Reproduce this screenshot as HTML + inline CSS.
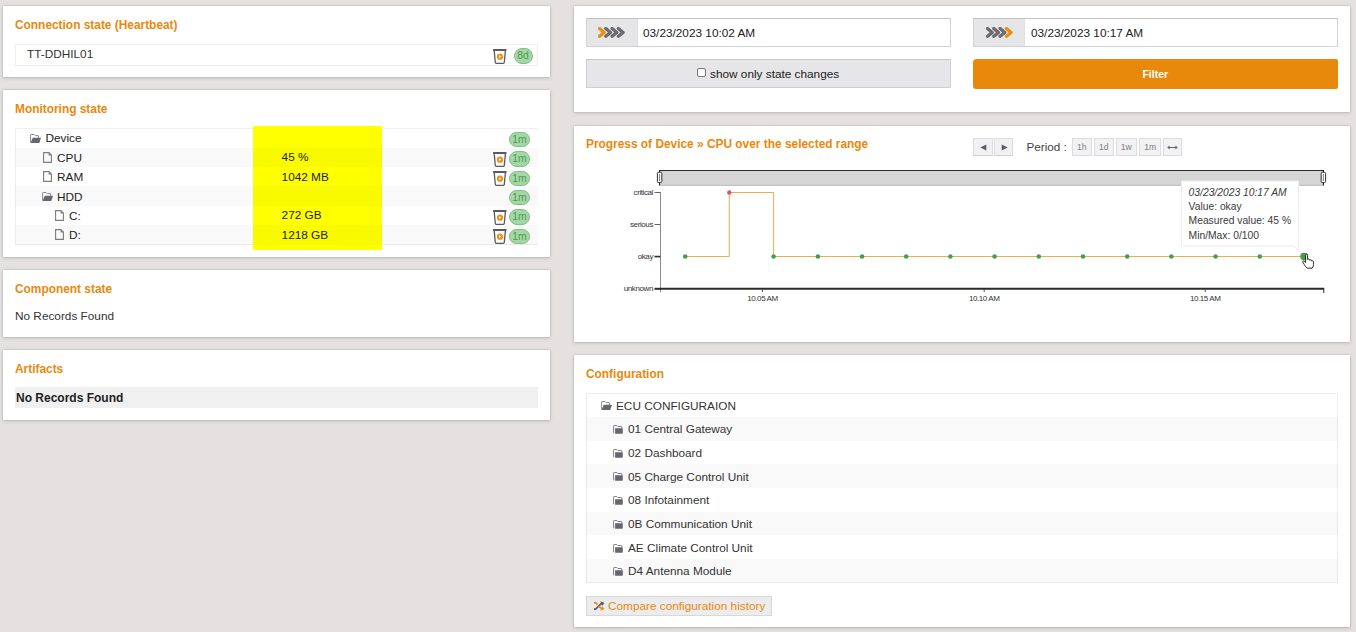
<!DOCTYPE html>
<html><head><meta charset="utf-8">
<style>
*{box-sizing:border-box;margin:0;padding:0}
html,body{width:1356px;height:632px;overflow:hidden}
body{background:#e5e1e1;font-family:"Liberation Sans",sans-serif;font-size:11.8px;color:#333;position:relative}
.p{position:absolute;background:#fff;box-shadow:0 1px 4px rgba(0,0,0,.16),0 0 1px rgba(0,0,0,.3)}
.t{position:absolute;font-weight:bold;color:#e8890c;font-size:11.9px;line-height:14px;white-space:nowrap;margin-top:-0.2px}
.a{position:absolute;white-space:nowrap}
.row{position:absolute;left:0;right:0}
.badge{position:absolute;width:21px;height:15.6px;border-radius:8px;background:#a6d6a8;border:1px solid #7cc17f;color:#479e4c;font-size:10.4px;line-height:13.8px;text-align:center}
.pb{position:absolute;height:17.6px;background:#f1f0f2;border:1px solid #dedede;border-bottom-color:#d0d0d0;color:#5a5a5a;font-size:9px;line-height:16.4px;text-align:center}
.pb2{position:absolute;height:17.6px;background:#f2f1f3;border:1px solid #dcdcdc;color:#808080;font-size:8.6px;line-height:17.4px;text-align:center}
.trash{position:absolute;width:14px;height:15px}
</style></head><body>
<svg width="0" height="0" style="position:absolute">
<defs>
<symbol id="fo" viewBox="0 0 11 9"><path d="M0.6,8.4 V1.1 Q0.6,0.5 1.2,0.5 H4.1 L5.2,1.6 H8.1 Q8.5,1.6 8.5,2 V3.8" fill="none" stroke="#88888e" stroke-width="1"/><path d="M2.8,3.8 H11 L9.3,8.9 H0.5 Z" fill="#66666e"/></symbol>
<symbol id="fi" viewBox="0 0 9 11"><path d="M0.6,0.6 H6 L8.4,3 V10.4 H0.6 Z" fill="none" stroke="#7c7c80" stroke-width="1.1"/><path d="M5.6,0.6 L8.4,3.4 H5.6 Z" fill="#7c7c80"/></symbol>
<symbol id="fc" viewBox="0 0 10 9"><path d="M0.6,8.3 V1.1 Q0.6,0.5 1.2,0.5 H3.9 L4.9,1.5 H8.3 Q8.8,1.5 8.8,2 V3.4" fill="none" stroke="#808086" stroke-width="1"/><path d="M2.1,3.2 H9.8 V8 Q9.8,8.8 9,8.8 H2.1 Z" fill="#66666e"/></symbol>
<symbol id="tr" viewBox="0 0 14 15"><rect x="0" y="0" width="13.6" height="1.9" rx="0.6" fill="#5a5a60"/><path d="M1.2,1.6 L2.3,13.5 Q2.4,14.3 3.2,14.3 H10.4 Q11.2,14.3 11.3,13.5 L12.4,1.6" fill="none" stroke="#5a5a60" stroke-width="1.3"/><circle cx="7" cy="7.7" r="3.1" fill="#ec9012"/><path d="M6.1,6.2 L8.4,7.6 L6.1,9 Z" fill="#fff"/><path d="M8.6,4.6 L10.2,6" stroke="#fff" stroke-width="0.7"/></symbol>
</defs></svg>

<!-- Connection state -->
<div class="p" style="left:3px;top:6px;width:547px;height:71px">
  <div class="t" style="left:12px;top:12px">Connection state (Heartbeat)</div>
  <div style="position:absolute;left:12px;top:38.2px;width:523px;height:21.8px;border:1px solid #eee">
    <div class="a" style="left:11px;top:2.2px;line-height:14px">TT-DDHIL01</div>
    <svg class="trash" style="left:477px;top:3.5px" viewBox="0 0 14 15"><use href="#tr"/></svg>
    <div class="badge" style="left:497.6px;top:2.6px;width:19px;height:15.8px">8d</div>
  </div>
</div>

<!-- Monitoring state -->
<div class="p" style="left:3px;top:90px;width:547px;height:167px">
  <div class="t" style="left:12px;top:12px">Monitoring state</div>
  <div style="position:absolute;left:12px;top:38.2px;width:523px;height:116.5px;border:1px solid #f0f0f0;border-right:none"></div>
  <div style="position:absolute;left:250px;top:36px;width:129px;height:123.5px;background:#ff0"></div>
  <div class="row" style="left:12px;right:12px;top:38.2px;height:19.4px;">
    <svg style="position:absolute;left:15px;top:5.8px" width="11" height="9" viewBox="0 0 11 9"><use href="#fo"/></svg>
    <div class="a" style="left:30.5px;top:3.2px;line-height:14px;color:#222">Device</div>
    <div class="a" style="left:266.6px;top:2.6px;line-height:14px;color:#222"></div>
    <div class="badge" style="left:494px;top:3.5px">1m</div>
  </div>
  <div class="row" style="left:12px;right:12px;top:57.6px;height:19.4px;background:rgba(0,0,0,0.025);">
    <svg style="position:absolute;left:28px;top:4px" width="9" height="11" viewBox="0 0 9 11"><use href="#fi"/></svg>
    <div class="a" style="left:42px;top:3.2px;line-height:14px;color:#222">CPU</div>
    <div class="a" style="left:266.6px;top:2.6px;line-height:14px;color:#222">45 %</div>
    <svg class="trash" style="left:478px;top:4px" viewBox="0 0 14 15"><use href="#tr"/></svg>
    <div class="badge" style="left:494px;top:3.5px">1m</div>
  </div>
  <div class="row" style="left:12px;right:12px;top:77.0px;height:19.4px;">
    <svg style="position:absolute;left:28px;top:4px" width="9" height="11" viewBox="0 0 9 11"><use href="#fi"/></svg>
    <div class="a" style="left:42px;top:3.2px;line-height:14px;color:#222">RAM</div>
    <div class="a" style="left:266.6px;top:2.6px;line-height:14px;color:#222">1042 MB</div>
    <svg class="trash" style="left:478px;top:4px" viewBox="0 0 14 15"><use href="#tr"/></svg>
    <div class="badge" style="left:494px;top:3.5px">1m</div>
  </div>
  <div class="row" style="left:12px;right:12px;top:96.4px;height:19.4px;background:rgba(0,0,0,0.025);">
    <svg style="position:absolute;left:27px;top:5.8px" width="11" height="9" viewBox="0 0 11 9"><use href="#fo"/></svg>
    <div class="a" style="left:42px;top:3.2px;line-height:14px;color:#222">HDD</div>
    <div class="a" style="left:266.6px;top:2.6px;line-height:14px;color:#222"></div>
    <div class="badge" style="left:494px;top:3.5px">1m</div>
  </div>
  <div class="row" style="left:12px;right:12px;top:115.8px;height:19.4px;">
    <svg style="position:absolute;left:40px;top:4px" width="9" height="11" viewBox="0 0 9 11"><use href="#fi"/></svg>
    <div class="a" style="left:54px;top:3.2px;line-height:14px;color:#222">C:</div>
    <div class="a" style="left:266.6px;top:2.6px;line-height:14px;color:#222">272 GB</div>
    <svg class="trash" style="left:478px;top:4px" viewBox="0 0 14 15"><use href="#tr"/></svg>
    <div class="badge" style="left:494px;top:3.5px">1m</div>
  </div>
  <div class="row" style="left:12px;right:12px;top:135.2px;height:19.4px;background:rgba(0,0,0,0.025);">
    <svg style="position:absolute;left:40px;top:4px" width="9" height="11" viewBox="0 0 9 11"><use href="#fi"/></svg>
    <div class="a" style="left:54px;top:3.2px;line-height:14px;color:#222">D:</div>
    <div class="a" style="left:266.6px;top:2.6px;line-height:14px;color:#222">1218 GB</div>
    <svg class="trash" style="left:478px;top:4px" viewBox="0 0 14 15"><use href="#tr"/></svg>
    <div class="badge" style="left:494px;top:3.5px">1m</div>
  </div>
</div>

<!-- Component state -->
<div class="p" style="left:3px;top:270px;width:547px;height:67px">
  <div class="t" style="left:12px;top:12px">Component state</div>
  <div class="a" style="left:12px;top:39.2px;line-height:14px">No Records Found</div>
</div>

<!-- Artifacts -->
<div class="p" style="left:3px;top:350px;width:547px;height:70px">
  <div class="t" style="left:12px;top:12px">Artifacts</div>
  <div style="position:absolute;left:12px;top:37.2px;width:523px;height:20.5px;background:#f1f0f1">
    <div class="a" style="left:1px;top:3.6px;line-height:14px;font-weight:bold;color:#222;font-size:12px">No Records Found</div>
  </div>
</div>

<!-- Right: filter -->
<div class="p" style="left:574px;top:6px;width:776px;height:106px"><div style="position:absolute;left:-1px;top:0;right:0;bottom:0">

  <div style="position:absolute;left:13px;top:12px;width:365px;height:29px;border:1px solid #d2d2d2;border-top-color:#c4c4c4;background:#fff">
    <div style="position:absolute;left:0;top:0;width:51px;height:27px;background:#e6e6e8;border-right:1px solid #e0e0e0"></div>
    <svg style="position:absolute;left:10.5px;top:7.6px" width="30" height="11"  viewBox="0 0 30 11"><path d="M7.8,1.5 L12.5,5.4 L7.8,9.3" fill="none" stroke="#6b6b70" stroke-width="3.3" stroke-linecap="round" stroke-linejoin="round"/><path d="M14.1,1.5 L18.8,5.4 L14.1,9.3" fill="none" stroke="#6b6b70" stroke-width="3.3" stroke-linecap="round" stroke-linejoin="round"/><path d="M20.4,1.5 L25.1,5.4 L20.4,9.3" fill="none" stroke="#6b6b70" stroke-width="3.3" stroke-linecap="round" stroke-linejoin="round"/><path d="M1.5,1.5 L6.2,5.4 L1.5,9.3" fill="none" stroke="#ea8d10" stroke-width="3.3" stroke-linecap="round" stroke-linejoin="round"/></svg>
    <div class="a" style="left:56px;top:7px;line-height:14px;color:#222">03/23/2023 10:02 AM</div>
  </div>
  <div style="position:absolute;left:13px;top:53px;width:365px;height:28.5px;border:1px solid #d0d0d0;border-top-color:#c4c4c4;background:#e6e5e7">
    <div style="position:absolute;left:109.5px;top:7.6px;width:9px;height:9px;border:1px solid #767676;border-radius:2px;background:#fff"></div>
    <div class="a" style="left:123px;top:6.6px;line-height:14px;color:#222">show only state changes</div>
  </div>
  <div style="position:absolute;left:400px;top:12px;width:365px;height:29px;border:1px solid #d2d2d2;border-top-color:#c4c4c4;background:#fff">
    <div style="position:absolute;left:0;top:0;width:51px;height:27px;background:#e6e6e8;border-right:1px solid #e0e0e0"></div>
    <svg style="position:absolute;left:12px;top:7.5px" width="30" height="11"  viewBox="0 0 30 11"><path d="M1.5,1.5 L6.2,5.4 L1.5,9.3" fill="none" stroke="#6b6b70" stroke-width="3.3" stroke-linecap="round" stroke-linejoin="round"/><path d="M7.8,1.5 L12.5,5.4 L7.8,9.3" fill="none" stroke="#6b6b70" stroke-width="3.3" stroke-linecap="round" stroke-linejoin="round"/><path d="M14.1,1.5 L18.8,5.4 L14.1,9.3" fill="none" stroke="#6b6b70" stroke-width="3.3" stroke-linecap="round" stroke-linejoin="round"/><path d="M20.4,1.5 L25.1,5.4 L20.4,9.3" fill="none" stroke="#ea8d10" stroke-width="3.3" stroke-linecap="round" stroke-linejoin="round"/></svg>
    <div class="a" style="left:57px;top:7px;line-height:14px;color:#222">03/23/2023 10:17 AM</div>
  </div>
  <div style="position:absolute;left:400px;top:53px;width:364.5px;height:30px;background:#e8890b;border-radius:4px 2px 2px 3px;color:#fff;font-weight:bold;font-size:10.5px;line-height:30px;text-align:center">Filter</div>
</div></div>

<!-- Right: chart -->
<div class="p" style="left:574px;top:126px;width:776px;height:216px"><div style="position:absolute;left:-1px;top:0;right:0;bottom:0">
  <div class="t" style="left:13px;top:11.2px">Progress of Device » CPU over the selected range</div>
<svg style="position:absolute;left:0;top:0" width="777" height="216" viewBox="573 126 777 216">
<rect x="659.5" y="170.5" width="664" height="15.3" fill="#d5d5d5"/>
<path d="M659.5,185.3 H1323.5" stroke="#bdbdbd" stroke-width="1"/>
<path d="M659.5,170.5 H1323.5" stroke="#2a2a2a" stroke-width="1"/>
<path d="M659.6,170 V185.5" stroke="#111" stroke-width="1"/>
<rect x="657.4" y="172.3" width="4.4" height="10.2" rx="1" fill="#fff" stroke="#333" stroke-width="1"/>
<path d="M659.6,174 V181" stroke="#666" stroke-width="0.8"/>
<path d="M1323.4,170 V185.5" stroke="#111" stroke-width="1"/>
<rect x="1321.2" y="172.3" width="4.4" height="10.2" rx="1" fill="#fff" stroke="#333" stroke-width="1"/>
<path d="M1323.4,174 V181" stroke="#666" stroke-width="0.8"/>
<path d="M660.5,192 V292.5" stroke="#8c8c8c" stroke-width="1" fill="none"/>
<path d="M654.5,192.5 H660.5" stroke="#666" stroke-width="1"/>
<path d="M654.5,224.5 H660.5" stroke="#666" stroke-width="1"/>
<path d="M654.5,256.6 H660.5" stroke="#333" stroke-width="1.7"/>
<path d="M654.5,288.8 H660.5" stroke="#2a2a2a" stroke-width="2"/>
<text x="653" y="195.1" text-anchor="end" font-family="Liberation Sans" font-size="8" letter-spacing="-0.4" fill="#333">critical</text>
<text x="653" y="227.1" text-anchor="end" font-family="Liberation Sans" font-size="8" letter-spacing="-0.4" fill="#333">serious</text>
<text x="653" y="259.1" text-anchor="end" font-family="Liberation Sans" font-size="8" letter-spacing="-0.4" fill="#333">okay</text>
<text x="653" y="291.1" text-anchor="end" font-family="Liberation Sans" font-size="8" letter-spacing="-0.4" fill="#333">unknown</text>
<path d="M660,288.8 H1324" stroke="#2a2a2a" stroke-width="2"/>
<path d="M1323.8,288 V293" stroke="#2a2a2a" stroke-width="1"/>
<path d="M762.5,289 V292" stroke="#555" stroke-width="1"/>
<text x="762.5" y="300.5" text-anchor="middle" font-family="Liberation Sans" font-size="8" letter-spacing="-0.4" fill="#333">10.05 AM</text>
<path d="M984.2,289 V292" stroke="#555" stroke-width="1"/>
<text x="984.2" y="300.5" text-anchor="middle" font-family="Liberation Sans" font-size="8" letter-spacing="-0.4" fill="#333">10.10 AM</text>
<path d="M1205.2,289 V292" stroke="#555" stroke-width="1"/>
<text x="1205.2" y="300.5" text-anchor="middle" font-family="Liberation Sans" font-size="8" letter-spacing="-0.4" fill="#333">10.15 AM</text>
<path d="M685.2,256.5 H729.3 V192.5 H773.6 V256.5 H1304" fill="none" stroke="#eeac4c" stroke-width="1"/>
<circle cx="685.2" cy="256.5" r="2.3" fill="#3fa24a"/>
<circle cx="773.6" cy="256.5" r="2.3" fill="#3fa24a"/>
<circle cx="817.9" cy="256.5" r="2.3" fill="#3fa24a"/>
<circle cx="862.1" cy="256.5" r="2.3" fill="#3fa24a"/>
<circle cx="906.2" cy="256.5" r="2.3" fill="#3fa24a"/>
<circle cx="950.4" cy="256.5" r="2.3" fill="#3fa24a"/>
<circle cx="994.6" cy="256.5" r="2.3" fill="#3fa24a"/>
<circle cx="1038.8" cy="256.5" r="2.3" fill="#3fa24a"/>
<circle cx="1083.0" cy="256.5" r="2.3" fill="#3fa24a"/>
<circle cx="1127.2" cy="256.5" r="2.3" fill="#3fa24a"/>
<circle cx="1171.4" cy="256.5" r="2.3" fill="#3fa24a"/>
<circle cx="1215.6" cy="256.5" r="2.3" fill="#3fa24a"/>
<circle cx="1259.8" cy="256.5" r="2.3" fill="#3fa24a"/>
<circle cx="729.3" cy="192.5" r="2.2" fill="#d9576b"/>
<circle cx="1304" cy="256.5" r="3.8" fill="#3fa24a"/>
<path d="M1181.5,181 H1298.5 V251 L1293.8,246 H1181.5 Z" fill="#fff" stroke="#ececec" stroke-width="1"/>
<g font-family="Liberation Sans" font-size="10.3" fill="#3a3a3a">
<text x="1188.6" y="196.3" font-style="italic">03/23/2023 10:17 AM</text>
<text x="1188.6" y="210.1">Value: okay</text>
<text x="1188.6" y="224.4">Measured value: 45 %</text>
<text x="1188.6" y="238.7">Min/Max: 0/100</text>
</g>
<path d="M1305.6,255.2 Q1305.6,254 1306.6,254 Q1307.6,254 1307.6,255.2 V259.6 Q1308,258.9 1308.8,259.1 Q1309.7,259.3 1309.7,260.2 Q1310.1,259.6 1310.9,259.9 Q1311.7,260.2 1311.7,261 Q1312.1,260.6 1312.8,260.9 Q1313.5,261.3 1313.5,262.2 V264.6 Q1313.5,266.8 1312,268.2 H1307.2 Q1305.6,266.8 1304.4,264.8 L1302.9,262.2 Q1302.5,261.3 1303.3,261 Q1304.1,260.7 1304.8,261.6 L1305.6,262.6 Z" fill="#fff" stroke="#111" stroke-width="0.9"/>
</svg>
  <div class="pb" style="left:400.2px;top:12px;width:19.4px"><svg style="position:absolute;left:5.5px;top:4.6px" width="7" height="7" viewBox="0 0 7 7"><path d="M0.3,3.5 L6.3,0.4 V6.6 Z" fill="#5e5e62"/></svg></div>
  <div class="pb" style="left:420.8px;top:12px;width:19.4px"><svg style="position:absolute;left:6px;top:4.6px" width="7" height="7" viewBox="0 0 7 7"><path d="M6.7,3.5 L0.7,0.4 V6.6 Z" fill="#5e5e62"/></svg></div>
  <div class="a" style="left:453.5px;top:14px;line-height:14px;font-size:11.7px;color:#444">Period :</div>
  <div class="pb2" style="left:499px;top:12px;width:19.6px">1h</div>
  <div class="pb2" style="left:521px;top:12px;width:19.6px">1d</div>
  <div class="pb2" style="left:543px;top:12px;width:20.7px">1w</div>
  <div class="pb2" style="left:566px;top:12px;width:22.4px">1m</div>
  <div class="pb2" style="left:590px;top:12px;width:18.8px"><svg style="position:absolute;left:3.4px;top:6.2px" width="11" height="5" viewBox="0 0 11 5"><path d="M1,2.5 H10" stroke="#666" stroke-width="1"/><path d="M0.2,2.5 L2.6,0.6 V4.4 Z M10.8,2.5 L8.4,0.6 V4.4 Z" fill="#666"/></svg></div>
</div></div>

<!-- Right: configuration -->
<div class="p" style="left:574px;top:355px;width:776px;height:272px"><div style="position:absolute;left:-1px;top:0;right:0;bottom:0">
  <div class="t" style="left:13px;top:12px">Configuration</div>
  <div style="position:absolute;left:13px;top:38px;width:752px;height:190px;border:1px solid #eee"></div>
  <div class="row" style="left:13px;right:12px;top:38.3px;height:23.7px;">
    <svg style="position:absolute;left:15px;top:8px" width="11" height="9" viewBox="0 0 11 9"><use href="#fo"/></svg>
    <div class="a" style="left:30px;top:5.6px;line-height:14px;color:#333">ECU CONFIGURAION</div>
  </div>
  <div class="row" style="left:13px;right:12px;top:62.0px;height:23.7px;background:rgba(0,0,0,0.025);">
    <svg style="position:absolute;left:27px;top:8px" width="10" height="9" viewBox="0 0 10 9"><use href="#fc"/></svg>
    <div class="a" style="left:42px;top:5.3px;line-height:14px;color:#333">01 Central Gateway</div>
  </div>
  <div class="row" style="left:13px;right:12px;top:85.7px;height:23.7px;">
    <svg style="position:absolute;left:27px;top:8px" width="10" height="9" viewBox="0 0 10 9"><use href="#fc"/></svg>
    <div class="a" style="left:42px;top:5.3px;line-height:14px;color:#333">02 Dashboard</div>
  </div>
  <div class="row" style="left:13px;right:12px;top:109.4px;height:23.7px;background:rgba(0,0,0,0.025);">
    <svg style="position:absolute;left:27px;top:8px" width="10" height="9" viewBox="0 0 10 9"><use href="#fc"/></svg>
    <div class="a" style="left:42px;top:5.3px;line-height:14px;color:#333">05 Charge Control Unit</div>
  </div>
  <div class="row" style="left:13px;right:12px;top:133.1px;height:23.7px;">
    <svg style="position:absolute;left:27px;top:8px" width="10" height="9" viewBox="0 0 10 9"><use href="#fc"/></svg>
    <div class="a" style="left:42px;top:5.3px;line-height:14px;color:#333">08 Infotainment</div>
  </div>
  <div class="row" style="left:13px;right:12px;top:156.8px;height:23.7px;background:rgba(0,0,0,0.025);">
    <svg style="position:absolute;left:27px;top:8px" width="10" height="9" viewBox="0 0 10 9"><use href="#fc"/></svg>
    <div class="a" style="left:42px;top:5.3px;line-height:14px;color:#333">0B Communication Unit</div>
  </div>
  <div class="row" style="left:13px;right:12px;top:180.5px;height:23.7px;">
    <svg style="position:absolute;left:27px;top:8px" width="10" height="9" viewBox="0 0 10 9"><use href="#fc"/></svg>
    <div class="a" style="left:42px;top:5.3px;line-height:14px;color:#333">AE Climate Control Unit</div>
  </div>
  <div class="row" style="left:13px;right:12px;top:204.2px;height:23.7px;background:rgba(0,0,0,0.025);">
    <svg style="position:absolute;left:27px;top:8px" width="10" height="9" viewBox="0 0 10 9"><use href="#fc"/></svg>
    <div class="a" style="left:42px;top:5.3px;line-height:14px;color:#333">D4 Antenna Module</div>
  </div>
  <div style="position:absolute;left:13px;top:241px;width:185.5px;height:20px;background:#ececee;border:1px solid #d8d8d8">
    <svg style="position:absolute;left:5.6px;top:3.9px" width="12" height="10" viewBox="0 0 12 10"><path d="M0.9,8.2 H2.6 L8.4,2.4" fill="none" stroke="#5c5c62" stroke-width="1.7" stroke-linejoin="round"/><path d="M7.4,0.2 L11.6,1.9 L8.9,4.9 Z" fill="#5c5c62"/><path d="M0.9,1.6 H2.6 L4.4,3.6" fill="none" stroke="#ea8d10" stroke-width="1.7" stroke-linejoin="round"/><path d="M5.8,5.2 L8,7.4" fill="none" stroke="#ea8d10" stroke-width="1.7"/><path d="M7.4,9.8 L11.6,8.1 L8.9,5.1 Z" fill="#ea8d10"/></svg>
    <div class="a" style="left:21px;top:2px;line-height:14px;color:#e8890c">Compare configuration history</div>
  </div>
</div></div>

</body></html>
